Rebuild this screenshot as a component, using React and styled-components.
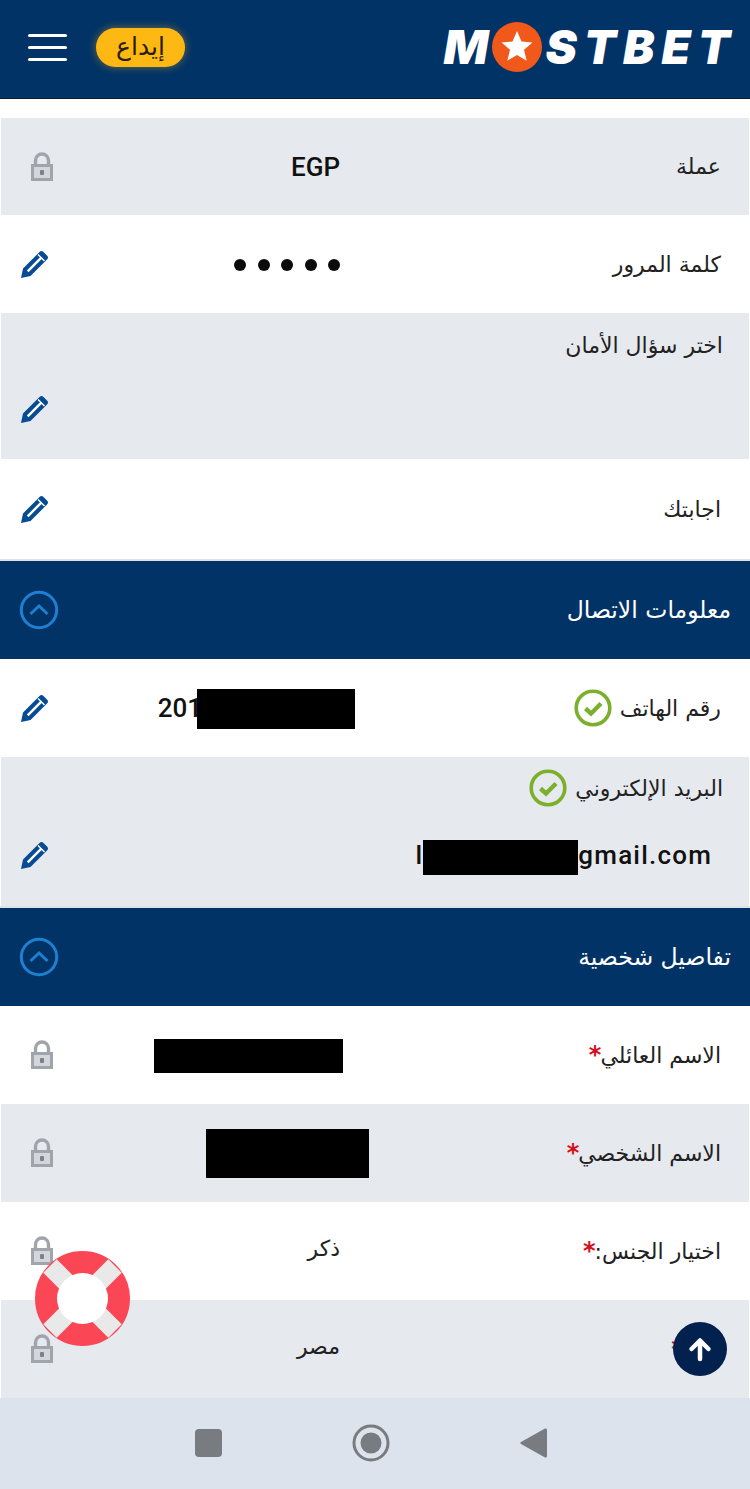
import React from "react";
import styled, { createGlobalStyle } from "styled-components";

const Global = createGlobalStyle`
  html, body { margin: 0; padding: 0; background: #fff; }
  body { font-family: Roboto, "DejaVu Sans", sans-serif; }
`;
const Page = styled.div`
  position: relative;
  width: 750px;
  height: 1489px;
  overflow: hidden;
  background: #fff;
`;
const Header = styled.header`
  display: flex;
  align-items: center;
  height: 94px;
  padding: 0 18px 4px 28px;
  background: #023366;
  border-bottom: 1px solid #0b1c33;
`;
const Burger = styled.div`
  display: flex;
  flex-direction: column;
  gap: 9px;
  width: 39px;
  margin-right: 29px;
  & > i { display: block; height: 3px; border-radius: 2px; background: #fff; }
`;
const Deposit = styled.button`
  width: 89px;
  height: 39px;
  padding: 0;
  border: 0;
  border-radius: 19.5px;
  background: #fdb813;
  box-shadow: 0 0 9px rgba(253, 184, 19, 0.45);
  color: #2a1c05;
  font-size: 25px;
  line-height: 36px;
  font-family: "DejaVu Sans", sans-serif;
`;
const Logo = styled.div`
  display: flex;
  align-items: center;
  margin-left: auto;
  margin-right: -5px;
  color: #fff;
  font: italic 900 47px/50px Inter, Roboto, sans-serif;
  letter-spacing: 7px;
`;
const LogoMark = styled.svg`
  display: block;
  flex: none;
  margin: 0 4px 0 -4px;
`;
const Body = styled.main`
  display: flex;
  flex-direction: column;
  padding-top: 19px;
`;
const Row = styled.section`
  display: flex;
  align-items: center;
  height: ${p => p.$h || 98}px;
  margin: 0 1px;
  padding: 0 28px 0 19px;
  background: ${p => (p.$alt ? "#e6e9ee" : "#fff")};
`;
const Stacked = styled.section`
  display: flex;
  flex-direction: column;
  height: ${p => p.$h}px;
  margin: 0 1px;
  padding: ${p => p.$pt}px 26px 0 19px;
  box-sizing: border-box;
  background: #e6e9ee;
`;
const BottomLine = styled.div`
  display: flex;
  align-items: center;
  margin-top: ${p => p.$gap}px;
`;
const IconSlot = styled.div`
  display: flex;
  justify-content: ${p => (p.$edit ? "flex-start" : "center")};
  flex: none;
  width: 44px;
`;
const Value = styled.div`
  display: flex;
  align-items: center;
  justify-content: flex-end;
  flex: none;
  width: 276px;
  color: #111;
  font-size: 26px;
  font-weight: 500;
  white-space: nowrap;
`;
const ArabicValue = styled.span`
  position: relative;
  top: -3px;
  font: 400 22px "DejaVu Sans", sans-serif;
  color: #222;
`;
const Dots = styled.div`
  display: flex;
  gap: 11.5px;
  margin-top: 2px;
  & > i { width: 12px; height: 12px; border-radius: 50%; background: #0b0b0b; }
`;
const Mask = styled.span`
  display: inline-block;
  flex: none;
  width: ${p => p.$w}px;
  height: ${p => p.$h}px;
  margin: ${p => p.$mt || 0}px ${p => p.$mr || 0}px 0 ${p => p.$ml || 0}px;
  background: #000;
`;
const Label = styled.div`
  display: flex;
  align-items: center;
  gap: 8px;
  margin-left: auto;
  color: #222;
  font: 400 22px "DejaVu Sans", sans-serif;
  direction: rtl;
`;
const Star = styled.span`
  align-self: flex-start;
  margin-right: -9px;
  color: #d6101c;
  font-size: 24px;
  font-weight: 700;
  line-height: 24px;
`;
const EmailValue = styled(Value)`
  width: auto;
  margin-left: auto;
  margin-right: 11px;
  letter-spacing: 1.2px;
`;
const Section = styled.section`
  display: flex;
  align-items: center;
  justify-content: space-between;
  height: 98px;
  padding: 0 19px;
  border-top: 2px solid #dfe3e8;
  background: #023366;
  color: #fff;
  font: 400 23.5px "DejaVu Sans", sans-serif;
`;
const NavBar = styled.nav`
  position: absolute;
  left: 0;
  right: 0;
  bottom: 0;
  display: flex;
  align-items: center;
  height: 91px;
  padding-left: 195px;
  padding-bottom: 1px;
  box-sizing: border-box;
  background: #dde3ec;
`;
const NavIcon = styled.svg`
  display: block;
  flex: none;
  margin-right: ${p => p.$mr}px;
`;
const Float = styled.button`
  position: absolute;
  left: ${p => p.$x}px;
  top: ${p => p.$y}px;
  width: ${p => p.$s}px;
  height: ${p => p.$s}px;
  padding: 0;
  border: 0;
  border-radius: 50%;
  background: ${p => p.$bg || "transparent"};
  display: flex;
  align-items: center;
  justify-content: center;
`;

const Lock = () => (
  <svg width="26" height="30" viewBox="0 0 26 30">
    <path d="M6.500 13V8.500a6.500 6.500 0 0 1 13 0V13" fill="none" stroke="#a0a5ab" strokeWidth="3.400" />
    <rect x="2" y="12" width="22" height="17" fill="#a0a5ab" />
    <rect x="5" y="15" width="16" height="11" fill="#d3d6db" />
    <rect x="11" y="18" width="4" height="5" rx="1" fill="#7d8288" />
  </svg>
);
const Pencil = () => (
  <svg width="30" height="30" viewBox="0 0 30 30">
    <path d="M1 29l2-9.500L19.500 3a2.800 2.800 0 0 1 4 0l3.500 3.500a2.800 2.800 0 0 1 0 4L10.500 27z" fill="#064b94" />
    <path d="M6.800 21.500L20.500 7.800l1.700 1.700L8.500 23.200z" fill="#fff" />
    <path d="M18 5.500l6.500 6.500" stroke="#fff" strokeWidth="1.400" />
  </svg>
);
const Chevron = () => (
  <svg width="40" height="40" viewBox="0 0 40 40">
    <circle cx="20" cy="20" r="17.700" fill="none" stroke="#1f7fd0" strokeWidth="3" />
    <path d="M11.500 24l8.500-8 8.500 8" fill="none" stroke="#1f7fd0" strokeWidth="3" />
  </svg>
);
const Check = () => (
  <svg width="38" height="38" viewBox="0 0 38 38">
    <circle cx="19" cy="19" r="16.800" fill="none" stroke="#7cb02c" strokeWidth="3.600" />
    <path d="M11.500 19.500l5.500 5 10-10" fill="none" stroke="#7cb02c" strokeWidth="4.400" />
  </svg>
);

const LockSlot = () => <IconSlot><Lock /></IconSlot>;
const EditSlot = () => <IconSlot $edit><Pencil /></IconSlot>;

export default function App() {
  return (
    <Page>
      <Global />
      <Header>
        <Burger><i /><i /><i /></Burger>
        <Deposit dir="rtl">إيداع</Deposit>
        <Logo>
          M
          <LogoMark width="50" height="50" viewBox="0 0 50 50">
            <circle cx="25" cy="25" r="25" fill="#f0591a" />
            <path d="M25 9l4.500 10.500 11 1-8.500 7.200 2.700 11L25 33l-9.700 5.700 2.700-11-8.500-7.200 11-1z" fill="#fff" />
          </LogoMark>
          STBET
        </Logo>
      </Header>
      <Body>
        <Row $alt $h={97}>
          <LockSlot /><Value>EGP</Value><Label>عملة</Label>
        </Row>
        <Row>
          <EditSlot /><Value><Dots><i /><i /><i /><i /><i /></Dots></Value><Label>كلمة المرور</Label>
        </Row>
        <Stacked $h={146} $pt={20}>
          <Label>اختر سؤال الأمان</Label>
          <BottomLine $gap={36}><EditSlot /></BottomLine>
        </Stacked>
        <Row $h={100}>
          <EditSlot /><Label>اجابتك</Label>
        </Row>
        <Section><Chevron /><span dir="rtl">معلومات الاتصال</span></Section>
        <Row>
          <EditSlot />
          <Value>201<Mask $w={158} $h={40} $mr={-15} $ml={-5} $mt={2} /></Value>
          <Label>رقم الهاتف <Check /></Label>
        </Row>
        <Stacked $h={149} $pt={12}>
          <Label>البريد الإلكتروني <Check /></Label>
          <BottomLine $gap={27}>
            <EditSlot />
            <EmailValue>l<Mask $w={155} $h={35} $mt={6} />gmail.com</EmailValue>
          </BottomLine>
        </Stacked>
        <Section><Chevron /><span dir="rtl">تفاصيل شخصية</span></Section>
        <Row>
          <LockSlot />
          <Value><Mask $w={189} $h={34} $mr={-3} $mt={2} /></Value>
          <Label>الاسم العائلي<Star>*</Star></Label>
        </Row>
        <Row $alt $h={98}>
          <LockSlot />
          <Value><Mask $w={163} $h={49} $mr={-29} /></Value>
          <Label>الاسم الشخصي<Star>*</Star></Label>
        </Row>
        <Row>
          <LockSlot />
          <Value><ArabicValue dir="rtl">ذكر</ArabicValue></Value>
          <Label>اختيار الجنس:<Star>*</Star></Label>
        </Row>
        <Row $alt>
          <LockSlot />
          <Value><ArabicValue dir="rtl">مصر</ArabicValue></Value>
          <Label>البلد<Star>*</Star></Label>
        </Row>
      </Body>
      <Float $x={35} $y={1251} $s={95}>
        <svg width="95" height="95" viewBox="0 0 95 95">
          <circle cx="47.500" cy="47.500" r="36" fill="none" stroke="#fb4655" strokeWidth="23" />
          <path d="M15 15l65 65M80 15L15 80" stroke="#e9e9e9" strokeWidth="19" />
          <circle cx="47.500" cy="47.500" r="25.500" fill="#fff" />
        </svg>
      </Float>
      <Float $x={673} $y={1322} $s={54} $bg="#02214f">
        <svg width="28" height="28" viewBox="0 0 28 28">
          <path d="M14 24V6M5.500 14L14 5.500l8.500 8.500" fill="none" stroke="#fff" strokeWidth="4.500" strokeLinecap="round" strokeLinejoin="round" />
        </svg>
      </Float>
      <NavBar>
        <NavIcon $mr={130} width="27" height="28" viewBox="0 0 27 28">
          <rect width="27" height="28" rx="4" fill="#787c80" />
        </NavIcon>
        <NavIcon $mr={130} width="38" height="38" viewBox="0 0 38 38">
          <circle cx="19" cy="19" r="17" fill="none" stroke="#787c80" strokeWidth="3" />
          <circle cx="19" cy="19" r="10.500" fill="#787c80" />
        </NavIcon>
        <NavIcon $mr={0} width="27" height="32" viewBox="0 0 27 32">
          <path d="M25 1.500a1.500 1.500 0 0 1 2 1.500v26a1.500 1.500 0 0 1-2 1.500L1 17a1.200 1.200 0 0 1 0-2z" fill="#787c80" />
        </NavIcon>
      </NavBar>
    </Page>
  );
}
